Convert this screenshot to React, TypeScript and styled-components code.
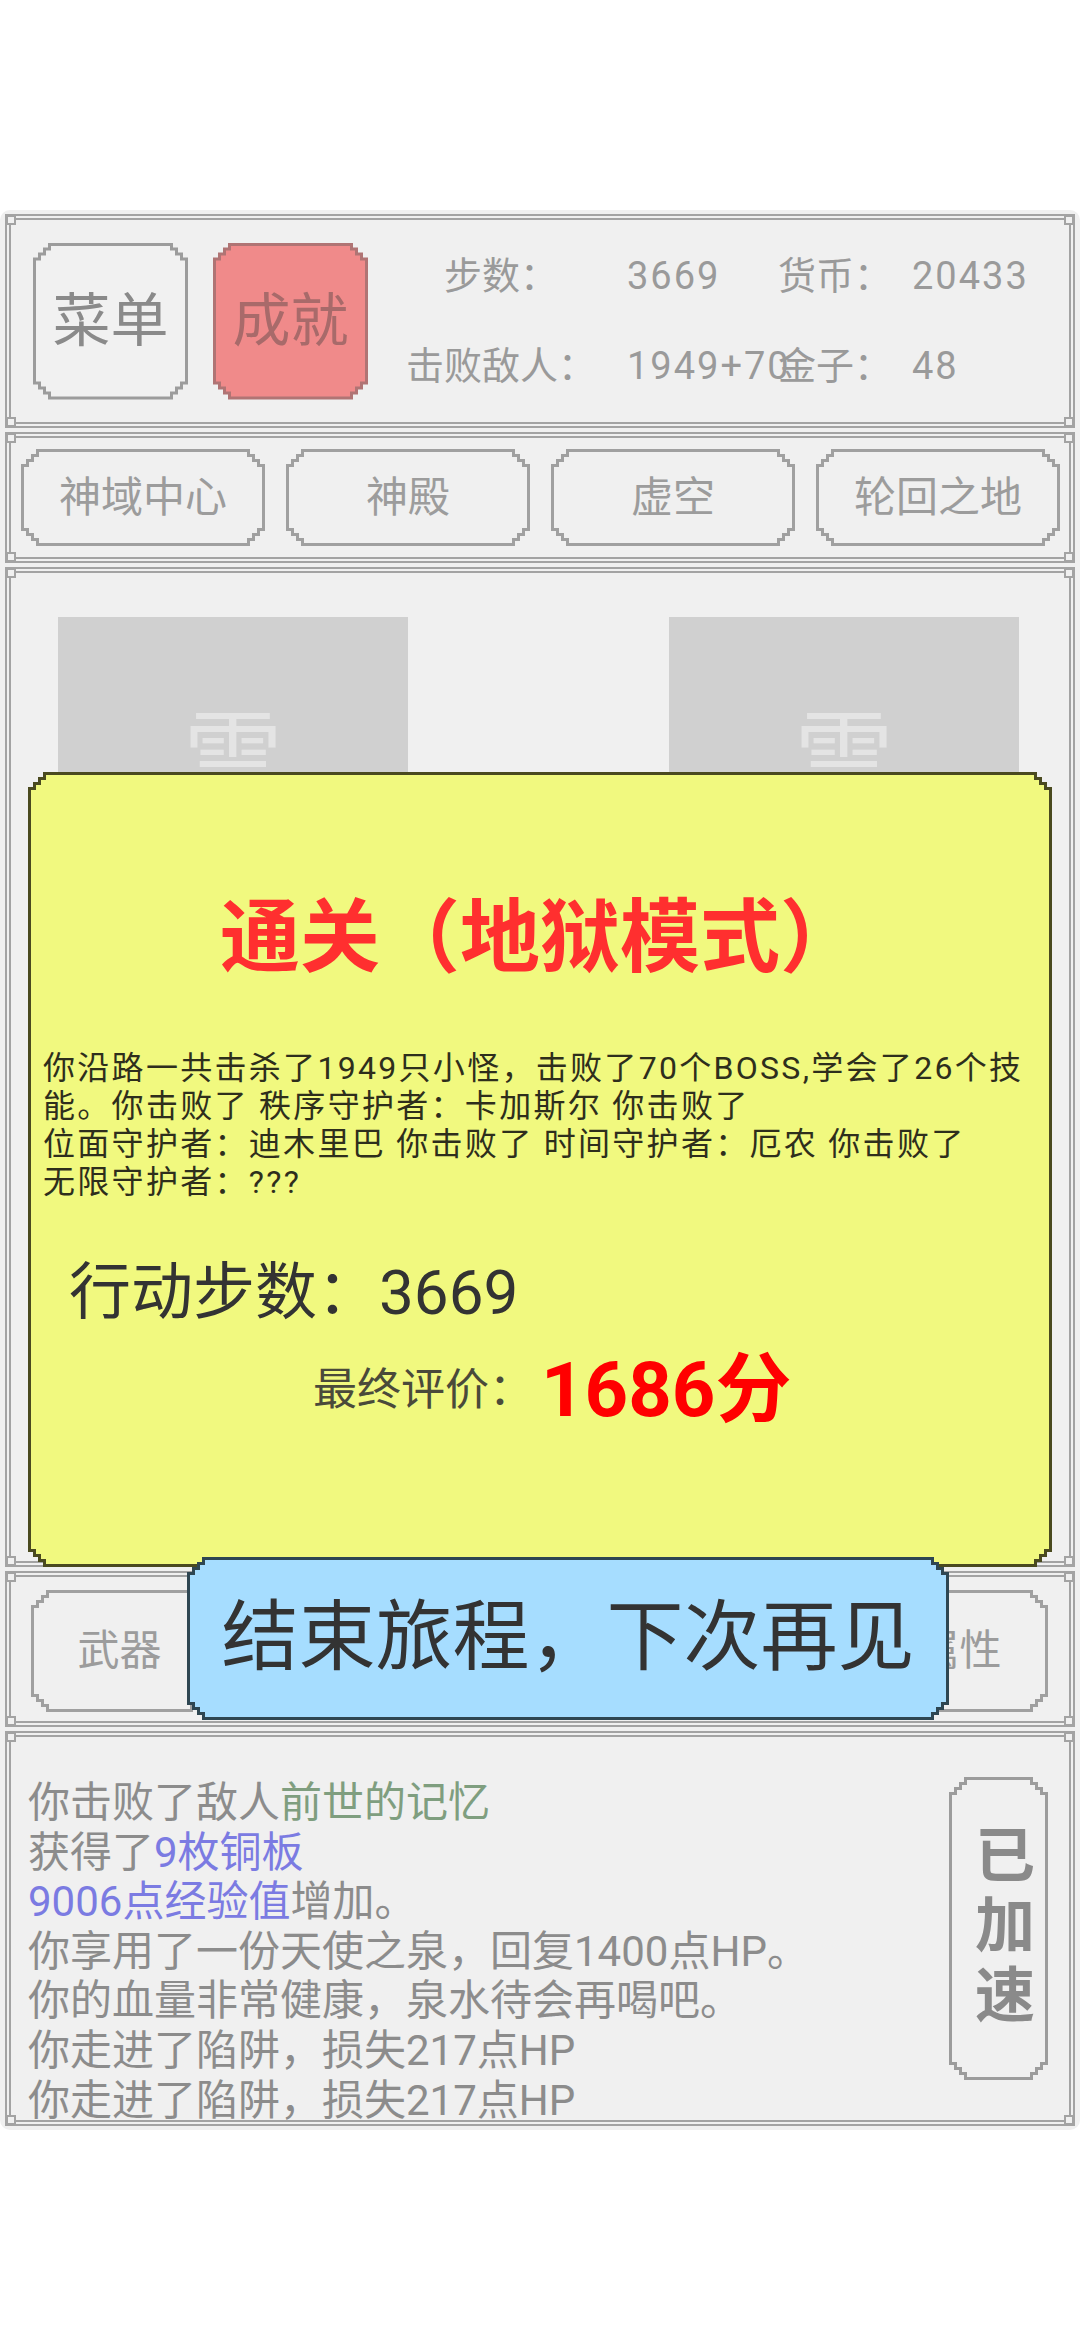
import styled, { createGlobalStyle } from 'styled-components';

const FONT = `Roboto, "Noto Sans CJK SC", "Noto Sans", sans-serif`;

// stepped (pixel-art) corner outline used by every button and the dialog
const stepClip = (d = 5, n = 3) => {
  const s = d * n;
  const p: string[] = [`${s}px 0`, `calc(100% - ${s}px) 0`];
  for (let i = 1; i <= n; i++) {
    p.push(`calc(100% - ${s - (i - 1) * d}px) ${i * d}px`, `calc(100% - ${s - i * d}px) ${i * d}px`);
  }
  p.push(`100% calc(100% - ${s}px)`);
  for (let i = 1; i <= n; i++) {
    p.push(
      `calc(100% - ${i * d}px) calc(100% - ${s - (i - 1) * d}px)`,
      `calc(100% - ${i * d}px) calc(100% - ${s - i * d}px)`
    );
  }
  p.push(`${s}px 100%`);
  for (let i = 1; i <= n; i++) {
    p.push(`${s - (i - 1) * d}px calc(100% - ${i * d}px)`, `${s - i * d}px calc(100% - ${i * d}px)`);
  }
  p.push(`0 ${s}px`);
  for (let i = 1; i <= n; i++) {
    p.push(`${i * d}px ${s - (i - 1) * d}px`, `${i * d}px ${s - i * d}px`);
  }
  return `polygon(${p.join(', ')})`;
};

const STEP = stepClip();

const GlobalStyle = createGlobalStyle`
  html, body {
    margin: 0;
    padding: 0;
    background: #ffffff;
  }
  body {
    font-family: ${FONT};
  }
  * {
    box-sizing: border-box;
  }
`;

const Screen = styled.div`
  width: 1080px;
  height: 2340px;
  padding-top: 210px;
  background: #ffffff;
  overflow: hidden;
`;

const Game = styled.div`
  position: relative;
  height: 1920px;
  background: #f0f0f0;
  border-radius: 10px;
  padding: 4px 5px;
  display: flex;
  flex-direction: column;
  gap: 4px;
`;

const Frame = styled.section<{ $h: number }>`
  position: relative;
  flex: none;
  height: ${(p) => p.$h}px;
  border: 6px double #a3a3a3;
`;

const Knot = styled.span<{ $v: 'top' | 'bottom'; $s: 'left' | 'right' }>`
  position: absolute;
  ${(p) => p.$v}: -5px;
  ${(p) => p.$s}: -5px;
  width: 10px;
  height: 10px;
  border: 2px solid #a3a3a3;
  background: #f0f0f0;
`;

const Corners = () => (
  <>
    <Knot $v="top" $s="left" />
    <Knot $v="top" $s="right" />
    <Knot $v="bottom" $s="left" />
    <Knot $v="bottom" $s="right" />
  </>
);

const StepEdge = styled.div<{ $w?: number; $h: number; $edge: string }>`
  flex: none;
  width: ${(p) => (p.$w ? `${p.$w}px` : '100%')};
  height: ${(p) => p.$h}px;
  padding: 3px;
  background: ${(p) => p.$edge};
  clip-path: ${STEP};
`;

const StepFill = styled.div<{ $fill: string }>`
  height: 100%;
  background: ${(p) => p.$fill};
  clip-path: ${STEP};
  display: flex;
  align-items: center;
  justify-content: center;
`;

/* ---------- top bar ---------- */

const TopBar = styled.div`
  height: 100%;
  display: flex;
  align-items: center;
  padding-left: 22px;
  gap: 25px;
`;

const MenuText = styled.span<{ $color: string }>`
  font-size: 58px;
  line-height: 1;
  color: ${(p) => p.$color};
  white-space: nowrap;
`;

const Stats = styled.div`
  margin-left: 8px;
  display: grid;
  grid-template-columns: 200px 177px 134px auto;
  grid-auto-rows: 90px;
  align-items: center;
  font-size: 38px;
  line-height: 90px;
  color: #9a9a9a;
  white-space: nowrap;
`;

const StatLabel = styled.span<{ $center?: boolean }>`
  text-align: ${(p) => (p.$center ? 'center' : 'left')};
`;

const StatValue = styled.span<{ $pad: number }>`
  padding-left: ${(p) => p.$pad}px;
  letter-spacing: 2px;
  overflow: visible;
  width: 0;
`;

/* ---------- nav ---------- */

const NavRow = styled.div`
  height: 100%;
  display: grid;
  grid-template-columns: repeat(4, 1fr);
  gap: 21px;
  padding: 11px 9px 11px 10px;
`;

const NavText = styled.span`
  font-size: 42px;
  line-height: 1;
  color: #9c9c9c;
`;

/* ---------- arena ---------- */

const Arena = styled.div`
  display: flex;
  justify-content: space-between;
  align-items: flex-start;
  padding: 44px 50px 0 47px;
`;

const CardSlot = styled.div`
  width: 350px;
  height: 300px;
  background: #d0d0d0;
  display: flex;
  align-items: center;
  justify-content: center;
  padding-bottom: 36px;
  font-size: 100px;
  color: #e4e4e4;
`;

/* ---------- equipment row ---------- */

const GearRow = styled.div`
  display: grid;
  grid-template-columns: repeat(5, 1fr);
  gap: 33px;
  padding: 13px 21px 0 20px;
`;

const GearText = styled.span`
  font-size: 42px;
  line-height: 1;
  color: #9c9c9c;
`;

/* ---------- log ---------- */

const LogArea = styled.div`
  height: 100%;
  display: flex;
  align-items: flex-start;
  overflow: hidden;
`;

const LogList = styled.div`
  flex: 1;
  height: 100%;
  overflow: hidden;
  padding: 41px 0 0 17px;
  font-size: 42px;
  line-height: 49.6px;
  color: #8c8c8c;
  white-space: nowrap;
`;

const Hl = styled.span<{ $tone: 'green' | 'purple' }>`
  color: ${(p) => (p.$tone === 'green' ? '#7f9e7f' : '#7b7be2')};
`;

const SideSlot = styled.div`
  margin: 40px 21px 0 0;
`;

const SideText = styled.span`
  writing-mode: vertical-rl;
  font-size: 60px;
  line-height: 1;
  letter-spacing: 10px;
  font-weight: 700;
  color: #8a8a8a;
`;

/* ---------- result modal ---------- */

const ModalLayer = styled.div`
  position: absolute;
  top: 562px;
  left: 0;
  right: 0;
  display: flex;
  flex-direction: column;
  align-items: flex-start;
`;

const DialogSlot = styled.div`
  margin-left: 28px;
`;

const DialogBody = styled(StepFill)`
  flex-direction: column;
  align-items: stretch;
  justify-content: flex-start;
  padding-top: 113px;
  color: #333333;
`;

const Title = styled.h1`
  margin: 0;
  font-size: 80px;
  line-height: 100px;
  font-weight: 700;
  text-align: center;
  color: #ff2f2f;
`;

const Story = styled.div`
  margin-top: 61px;
  padding-left: 12px;
  font-size: 32px;
  line-height: 38px;
  letter-spacing: 2.3px;
  color: #2e2e1c;
  white-space: pre;
`;

const StepsLine = styled.div`
  margin-top: 52px;
  padding-left: 38px;
  font-size: 62px;
  line-height: 80px;
  color: #333333;
`;

const ScoreRow = styled.div`
  margin-top: 12px;
  padding-left: 282px;
  height: 90px;
  display: flex;
  align-items: center;
  gap: 8px;
`;

const ScoreLabel = styled.span`
  font-size: 44px;
  line-height: 90px;
  color: #4a4a3a;
`;

const ScoreValue = styled.span`
  font-size: 76px;
  line-height: 90px;
  font-weight: 700;
  color: #ff0000;
`;

const FinishSlot = styled.div`
  margin: -10px 0 0 187px;
  position: relative;
`;

const FinishText = styled.span`
  font-size: 77px;
  line-height: 1;
  color: #333333;
  white-space: nowrap;
`;

const storyLines = [
  '你沿路一共击杀了1949只小怪，击败了70个BOSS,学会了26个技',
  '能。你击败了 秩序守护者：卡加斯尔 你击败了',
  '位面守护者：迪木里巴 你击败了 时间守护者：厄农 你击败了',
  '无限守护者：???',
];

const navItems = ['神域中心', '神殿', '虚空', '轮回之地'];
const gearItems = ['武器', '防具', '饰品', '技能', '属性'];

export default function App() {
  return (
    <Screen>
      <GlobalStyle />
      <Game>
        <Frame $h={214}>
          <Corners />
          <TopBar>
            <StepEdge $w={155} $h={157} $edge="#9c9c9c">
              <StepFill $fill="#f1f1f1">
                <MenuText $color="#8a8a8a">菜单</MenuText>
              </StepFill>
            </StepEdge>
            <StepEdge $w={155} $h={157} $edge="#b07474">
              <StepFill $fill="#f08a8a">
                <MenuText $color="#a86a6a">成就</MenuText>
              </StepFill>
            </StepEdge>
            <Stats>
              <StatLabel $center>步数：</StatLabel>
              <StatValue $pad={26}>3669</StatValue>
              <StatLabel>货币：</StatLabel>
              <StatValue $pad={0}>20433</StatValue>
              <StatLabel $center>击败敌人：</StatLabel>
              <StatValue $pad={26}>1949+70</StatValue>
              <StatLabel>金子：</StatLabel>
              <StatValue $pad={0}>48</StatValue>
            </Stats>
          </TopBar>
        </Frame>

        <Frame $h={131}>
          <Corners />
          <NavRow>
            {navItems.map((n) => (
              <StepEdge key={n} $h={97} $edge="#a0a0a0">
                <StepFill $fill="#f0f0f0">
                  <NavText>{n}</NavText>
                </StepFill>
              </StepEdge>
            ))}
          </NavRow>
        </Frame>

        <Frame $h={1000}>
          <Corners />
          <Arena>
            <CardSlot>雲</CardSlot>
            <CardSlot>雲</CardSlot>
          </Arena>
        </Frame>

        <Frame $h={156}>
          <Corners />
          <GearRow>
            {gearItems.map((g) => (
              <StepEdge key={g} $h={122} $edge="#a0a0a0">
                <StepFill $fill="#f0f0f0">
                  <GearText>{g}</GearText>
                </StepFill>
              </StepEdge>
            ))}
          </GearRow>
        </Frame>

        <Frame $h={395}>
          <Corners />
          <LogArea>
            <LogList>
              <div>
                你击败了敌人<Hl $tone="green">前世的记忆</Hl>
              </div>
              <div>
                获得了<Hl $tone="purple">9枚铜板</Hl>
              </div>
              <div>
                <Hl $tone="purple">9006点经验值</Hl>增加。
              </div>
              <div>你享用了一份天使之泉，回复1400点HP。</div>
              <div>你的血量非常健康，泉水待会再喝吧。</div>
              <div>你走进了陷阱，损失217点HP</div>
              <div>你走进了陷阱，损失217点HP</div>
            </LogList>
            <SideSlot>
              <StepEdge $w={99} $h={303} $edge="#9c9c9c">
                <StepFill $fill="#f0f0f0">
                  <SideText>已加速</SideText>
                </StepFill>
              </StepEdge>
            </SideSlot>
          </LogArea>
        </Frame>

        <ModalLayer>
          <DialogSlot>
            <StepEdge $w={1024} $h={795} $edge="#4a4a1f">
              <DialogBody $fill="#f1f97f">
                <Title>通关（地狱模式）</Title>
                <Story>
                  {storyLines.map((l) => (
                    <div key={l}>{l}</div>
                  ))}
                </Story>
                <StepsLine>行动步数：3669</StepsLine>
                <ScoreRow>
                  <ScoreLabel>最终评价：</ScoreLabel>
                  <ScoreValue>1686分</ScoreValue>
                </ScoreRow>
              </DialogBody>
            </StepEdge>
          </DialogSlot>
          <FinishSlot>
            <StepEdge $w={762} $h={163} $edge="#2e4652">
              <StepFill $fill="#a6ddff">
                <FinishText>结束旅程，下次再见</FinishText>
              </StepFill>
            </StepEdge>
          </FinishSlot>
        </ModalLayer>
      </Game>
    </Screen>
  );
}
